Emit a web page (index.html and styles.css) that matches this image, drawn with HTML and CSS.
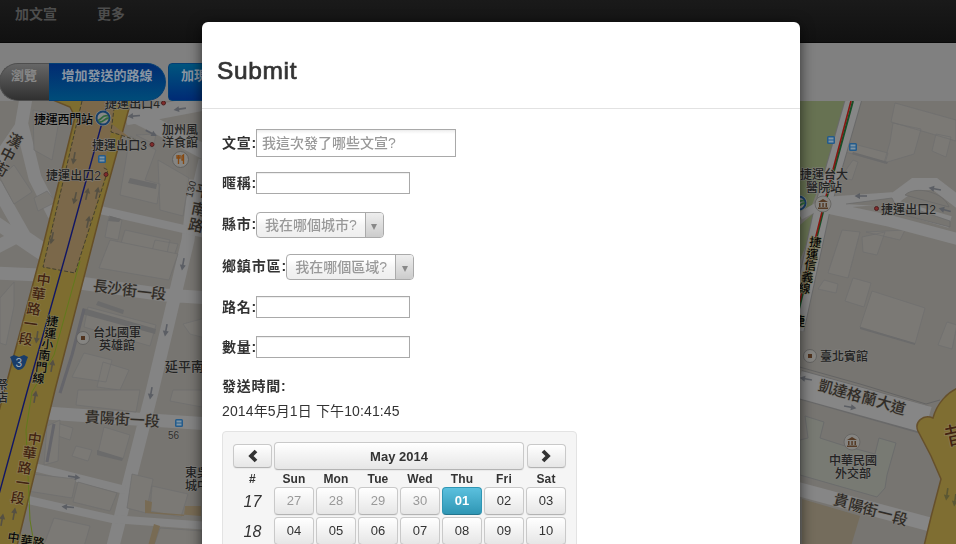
FILE: index.html
```html
<!DOCTYPE html>
<html lang="zh-Hant">
<head>
<meta charset="utf-8">
<title>Submit</title>
<link rel="stylesheet" href="styles.css">
</head>
<body>
<div class="page">
  <nav class="navbar"><a>加文宣</a><a>更多</a></nav>
  <div class="toolbar">
    <button class="tool tool-browse">瀏覽</button><button class="tool tool-route">增加發送的路線</button><button class="tool tool-spot">加現場</button>
  </div>
  <svg class="map" viewBox="0 101 956 443" width="956" height="443">
    <defs>
      <g id="bus"><rect x="-4" y="-4" width="8" height="8" rx="1.5" fill="#235b8b"/><path d="M-2.500-2.500h5v2h-5zM-2.500 .5h5v2h-5z" fill="#7f95a6"/></g>
      <g id="arrow"><path d="M-6-.8H1V-3L6.500 0L1 3V.8H-6Z"/></g>
      <g id="museum"><circle r="8" fill="#858481" stroke="#696866"/><path d="M-5-2L0-5L5-2ZM-4-1h1.500v4h-1.500zM-.7-1h1.500v4h-1.500zM2.500-1h1.500v4h-1.500zM-5 3.500h10v1.500h-10z" fill="#553a25"/></g>
      <g id="metro"><circle r="8" fill="#868886"/><circle r="6.500" fill="none" stroke="#173f69" stroke-width="2"/><path d="M-5 2C-2 3-1-4 5-2M-4 4C1 5 1 0 6 0" fill="none" stroke="#31683e" stroke-width="1.800"/></g>
    </defs>
    <rect y="101" width="956" height="443" fill="#777571"/>
    <!-- side streets -->
    <g fill="none" stroke="#848484" stroke-width="13">
      <path d="M26 98L21 127L-5 165M22 125L35 178L54 215M-5 184L25 237L50 254M-5 222L42 254M-5 273L40 275M-5 248L20 235"/>
      <path d="M80 283L165 295L210 298M195 180L188 240L152 392L112 550M46 413L210 424M205 160L190 225"/>
      <path d="M100 210L210 235M30 466L125 490M24 499L112 519L210 526" stroke-width="8"/>
      <path d="M126 118L205 103M128 112L160 128L210 155" stroke-width="15"/>
    </g>
    <!-- blocks -->
    <g fill="#7b7975" stroke="#6f6e6f" stroke-width=".7">
      <path d="M33 110L60 115L52 160L34 150ZM0 178L14 165L32 192L14 204ZM0 298L14 282L14 306L6 345L0 343ZM34 198L47 191L56 202L38 211Z"/>
      <path d="M130 136L156 150L145 180L160 184L157 204L120 195ZM158 160L189 178L183 216L160 210ZM109 216L122 220L118 240L105 237ZM125 230L170 240L163 270L116 260ZM155 240L178 244L170 268L150 258Z"/>
      <path d="M110 240L178 254L169 280L99 268ZM88 307L156 325L150 346L84 327ZM84 353L112 360L106 382L72 377ZM103 362L129 370L120 390L97 387Z"/>
      <path d="M78 390H140L136 412L76 405ZM173 390H202V407L170 401ZM57 423L73 428L70 440L55 435ZM76 446L92 450L88 461L72 456ZM104 427L130 435L123 459L98 453Z"/>
      <path d="M32 474L76 479L72 498L28 491ZM78 482L117 493L110 511L73 502ZM54 518L90 526L83 550H42ZM132 474L153 479L146 513L127 508ZM152 486L188 494L181 517L150 511ZM160 528L202 531V545H154Z"/>
      <path d="M183 324L205 318V338L190 334ZM47 426L60 420L58 461L44 465ZM136 135L156 134L154 144Z"/>
      <path d="M895 103L956 120V141L891 122ZM893 123L921 129L914 154L884 163L890 142ZM936 134L951 137L946 157L932 151ZM846 142L888 153L885 163L842 151ZM853 160L858 162L852 180L841 177Z"/>
      <path d="M842 230L860 232L848 278L828 273ZM862 237L885 232L877 255L863 252ZM853 278L871 283L864 307L845 301ZM872 291L925 308L915 344L860 327ZM824 280L838 284L836 293L818 289ZM947 322L957 325L952 349L938 345ZM866 232L905 230L900 240Z"/>
    </g>
    <path d="M805 416L824 422L820 438L845 446L875 454L879 438L896 443L887 475L885 488L877 497L800 475V440L808 438Z" fill="#787a73" stroke="#6b6c6c"/>
    <path d="M802 499L860 516L851 546H802Z" fill="#746c5c"/>
    <path d="M145 500L152 502L151 512L201 516V506L185 506L184 516L145 513ZM154 524L160 526L154 546H148Z" fill="#786b54"/>
    <g fill="#6b6b6b"><path d="M98 301L124 310L123 314L96 305ZM83 308L156 329L155 334L82 314ZM80 153L89 158L84 185L77 190ZM130 178L157 184L156 189L128 183ZM110 216L121 219L119 222L108 221ZM97 450L123 458L122 461L97 455ZM853 152L888 162L887 164L852 154ZM860 327L915 343L915 345L860 329Z"/></g>
    <!-- boulevard on the left -->
    <path d="M48 98H132L128 112L103 203L55 390L17 546H-2V415L42 250L75 117L70 107Z" fill="#7e6d30" stroke="#664f27" stroke-width="1.500"/>
    <path d="M82 101H115L110 132L129 137M115 101L111 132L105 164L107 170L75 273L43 267L82 101" fill="#7b684a"/>
    <path d="M82 101L43 267L75 273L108 170L102 167M115 101L111 132L136 140" fill="none" stroke="#44402f" stroke-dasharray="4 2"/>
    <path d="M80 261L54 355L32 392L26 430L30 520L34 544" fill="none" stroke="#617a1c"/>
    <path d="M108 101L67 250L27 392L-2 498" fill="none" stroke="#111665" stroke-width="1.400"/>
    <path d="M84 309L72 355L60 393M54 424L47 462" stroke="#65656a" stroke-width="3" fill="none"/>
    <g fill="#555043">
      <use href="#arrow" transform="translate(74 158) rotate(100)"/><use href="#arrow" transform="translate(75 198) rotate(103)"/>
      <use href="#arrow" transform="translate(87 194) rotate(-78)"/><use href="#arrow" transform="translate(97 193) rotate(-78)"/>
      <use href="#arrow" transform="translate(88 222) rotate(-78)"/><use href="#arrow" transform="translate(52 238) rotate(102)"/>
      <use href="#arrow" transform="translate(37 337) rotate(98)"/><use href="#arrow" transform="translate(52 366) rotate(-80)"/>
      <use href="#arrow" transform="translate(35 397) rotate(-80)"/><use href="#arrow" transform="translate(14 514) rotate(-80)"/>
      <use href="#arrow" transform="translate(2 520) rotate(-80)"/>
    </g>
    <g fill="#5b5e64">
      <use href="#arrow" transform="translate(134 116) rotate(175)"/><use href="#arrow" transform="translate(180 109) rotate(172)"/><use href="#arrow" transform="translate(151 133) rotate(28)"/>
      <use href="#arrow" transform="translate(183 264) rotate(100)"/><use href="#arrow" transform="translate(166 330) rotate(100)"/><use href="#arrow" transform="translate(151 393) rotate(100)"/>
      <use href="#arrow" transform="translate(74 477) rotate(8)"/><use href="#arrow" transform="translate(68 507) rotate(185)"/>
    </g>
    <!-- park and roads on the right -->
    <path d="M800 101H845L826 168L812 205L800 220Z" fill="#677252"/>
    <path d="M800 225L815 212L808 240L800 260Z" fill="#677252"/>
    <g fill="none" stroke="#696969">
      <path d="M854 98L822 210L796 330" stroke-width="17"/><path d="M854 98L822 210L796 330" stroke="#868686" stroke-width="15"/>
      <path d="M824 203L895 198L914 184L935 184L961 204M824 207L890 221L961 240M888 204L950 222" stroke="#868686" stroke-width="12"/>
      <path d="M798 384L925 420" stroke-width="29"/><path d="M798 384L928 420" stroke="#868686" stroke-width="27"/>
      <path d="M798 489L932 525" stroke="#868686" stroke-width="14"/><path d="M800 216L820 205" stroke="#868686" stroke-width="8"/>
      <path d="M846 204L892 198L900 214L950 227V221L912 208M905 195C915 185 944 192 949 207Z" fill="#777571" stroke-width=".7"/>
    </g>
    <path d="M853 101L825 204L799 309" stroke="#174e27" stroke-width="2" fill="none"/>
    <path d="M851 101L824 204L799 304" stroke="#861711" stroke-width="1.600" fill="none"/>
    <path d="M796 366L860 384L926 404L940 400" stroke="#646464" fill="none"/>
    <path d="M958 388C948 392 937 403 933 418C923 414 914 422 918 431L931 456L941 479L931 517L924 546H958Z" fill="#7f6e32" stroke="#66502b" stroke-width="1.500"/>
    <g fill="#5b5e64"><use href="#arrow" transform="translate(861 196) rotate(180)"/><use href="#arrow" transform="translate(935 189) rotate(190)"/><use href="#arrow" transform="translate(945 210) rotate(195)"/><use href="#arrow" transform="translate(806 379) rotate(190)"/><use href="#arrow" transform="translate(850 407) rotate(10)"/></g>
    <g fill="#5b5733"><use href="#arrow" transform="translate(947 494) rotate(98)"/><use href="#arrow" transform="translate(955 500) rotate(98)"/></g>
    <!-- markers -->
    <use href="#bus" x="102" y="159"/><use href="#bus" x="179" y="423"/><use href="#bus" x="831" y="140"/><use href="#bus" x="853" y="147"/>
    <use href="#metro" x="103" y="118"/><use href="#metro" x="799" y="203"/>
    <use href="#museum" x="823" y="204"/><use href="#museum" x="852" y="442"/>
    <g fill="#812b2b" stroke="#4b2020"><circle cx="152" cy="144.500" r="2"/><circle cx="106" cy="174.500" r="2"/><circle cx="163.500" cy="103" r="2"/><circle cx="876.500" cy="208.500" r="2"/></g>
    <g fill="#858481" stroke="#62615f"><circle cx="180.500" cy="159.500" r="8"/><circle cx="83" cy="338" r="6.500"/><circle cx="810" cy="356" r="6.500"/></g>
    <path d="M81 336h4v4h-4zM808 354h4v4h-4z" fill="#50331e"/>
    <path d="M178.500 155v9M177 155v3h3v-3M183.500 164v-9l-1.500 1v4h1.500" fill="none" stroke="#864911" stroke-width="1.300"/>
    <path d="M10 357L14 355L19 357L24 355L28 357C25 363 26 369 18 370C12 367 13 362 10 357Z" fill="#193d69"/>
    <text x="15.500" y="367" fill="#9eabb8" font-size="12">3</text>
    <!-- labels -->
    <g class="poi">
      <text class="station" x="34" y="123.500" textLength="59">捷運西門站</text><text x="105" y="107.500" textLength="55">捷運出口4</text>
      <text x="92" y="149.500" textLength="55">捷運出口3</text><text x="46" y="179.500" textLength="55">捷運出口2</text>
      <text x="162" y="133.500">加州風</text><text x="162" y="146.500">洋食館</text>
      <text x="93" y="336.500">台北國軍</text><text x="99" y="349.500">英雄館</text>
      <text x="165" y="370.500" font-size="13">延平南</text><text x="185" y="477">東吳</text><text x="185" y="490">城中</text>
      <text x="-4" y="389">祭</text><text x="-4" y="402">店</text>
      <text x="800" y="178.500">捷運台大</text><text x="806" y="191.500">醫院站</text><text x="881" y="213.500" textLength="55">捷運出口2</text>
      <text x="820" y="360.500">臺北賓館</text><text x="829" y="464.500">中華民國</text><text x="835" y="477.500">外交部</text>
      <text class="num" x="168" y="439">56</text><text class="num" transform="translate(192 198) rotate(-75)">130</text>
    </g>
    <g class="street" transform="translate(0 5)">
      <text x="100 114 129 144 158" y="286 288 290 292 293" rotate="6">長沙街一段</text>
      <text x="92 107 122 137 152" y="417 418 419 420 421" rotate="3">貴陽街一段</text>
      <text x="825 839 853 868 883 897" y="385 389 393 397 401 406" rotate="15">凱達格蘭大道</text>
      <text x="840 855 869 884 899" y="499 504 508 512 517" rotate="14">貴陽街一段</text>
      <text x="13 6 -1" y="137 151 165" rotate="28">漢中街</text>
      <text x="202 198 195" y="190 208 224" rotate="12">平南路</text>
    </g>
    <g class="avenue" transform="translate(0 5)">
      <text x="43 38 33 30 25" y="279 293 308 323 338" rotate="8">中華路一段</text>
      <text x="34 29 24 22 17" y="438 452 467 482 497" rotate="8">中華路一段</text>
      <text class="circle" x="958" y="441" rotate="-12">昔</text>
    </g>
    <g class="line" transform="translate(0 4)">
      <text x="52 50 47 44 41 38" y="321 333 344 355 367 378" rotate="6">捷運小南門線</text>
      <text x="815 812 810 807 804" y="242 254 265 277 288" rotate="6">捷運信義線</text>
      <text x="13 26 38" y="537 540 542" rotate="8">中華路</text>
      <text x="799" y="322">捷</text>
    </g>
  </svg>
</div>

<section class="modal">
  <header class="modal-header"><h3>Submit</h3></header>
  <form class="modal-body">
    <div class="row row-leaflet"><label>文宣:</label><input class="wide" type="text" placeholder="我這次發了哪些文宣?"></div>
    <div class="row"><label>暱稱:</label><input type="text"></div>
    <div class="row row-select"><label>縣市:</label><div class="select"><span>我在哪個城市?</span><i></i></div></div>
    <div class="row row-select row-area"><label>鄉鎮市區:</label><div class="select"><span>我在哪個區域?</span><i></i></div></div>
    <div class="row"><label>路名:</label><input type="text"></div>
    <div class="row"><label>數量:</label><input type="text"></div>
    <div class="row row-time"><label>發送時間:</label></div>
    <p class="stamp">2014年5月1日 下午10:41:45</p>
    <div class="calendar">
      <div class="cal-head">
        <button type="button" class="btn arrow"><svg width="13" height="14" viewBox="0 0 13 14"><path d="M10 2L5 7L10 12" /></svg></button>
        <button type="button" class="btn month">May 2014</button>
        <button type="button" class="btn arrow"><svg width="13" height="14" viewBox="0 0 13 14"><path d="M3 2L8 7L3 12" /></svg></button>
      </div>
      <div class="week names"><b>#</b><b>Sun</b><b>Mon</b><b>Tue</b><b>Wed</b><b>Thu</b><b>Fri</b><b>Sat</b></div>
      <div class="week"><em>17</em><span class="btn muted">27</span><span class="btn muted">28</span><span class="btn muted">29</span><span class="btn muted">30</span><span class="btn active">01</span><span class="btn">02</span><span class="btn">03</span></div>
      <div class="week"><em>18</em><span class="btn">04</span><span class="btn">05</span><span class="btn">06</span><span class="btn">07</span><span class="btn">08</span><span class="btn">09</span><span class="btn">10</span></div>
    </div>
  </form>
</section>
</body>
</html>
```
FILE: styles.css
```css
* { box-sizing: border-box; }
html, body { margin: 0; height: 544px; overflow: hidden; }
body { background: #808080; color: #333; font: 14px/20px "Liberation Sans", "Noto Sans CJK TC", sans-serif; }
button, input { font-family: inherit; margin: 0; }
.page { width: 956px; height: 544px; overflow: hidden; }
.navbar { display: flex; gap: 40px; height: 43px; padding: 4px 15px; background: linear-gradient(#1a1a1a, #111); border-bottom: 1px solid #090909; color: #4d4d4d; font-weight: bold; }
.toolbar { display: flex; height: 58px; padding-top: 20px; }
.tool { height: 38px; border: 1px solid #2b4c65; padding: 0 12px 12px; font-size: 13px; line-height: 24px; font-weight: bold; color: #8995a2; white-space: nowrap; }
.tool-browse { width: 50px; margin-left: -1px; padding: 0 12px 12px 11px; border-color: #4e4e4e; border-right: 0; border-radius: 19px 0 0 19px; background: linear-gradient(#666, #303030); color: #888; }
.tool-route { width: 117px; border-color: #053f73; border-left: 0; border-radius: 0 19px 19px 0; background: linear-gradient(#012c72, #004c79); }
.tool-spot { width: 65px; margin-left: 2px; border-color: #053f73; border-radius: 4px; background: linear-gradient(#00557e, #002b75); }
.map { display: block; }
.map text { font-family: "Liberation Sans", "Noto Sans CJK TC", sans-serif; paint-order: stroke; }
.poi { font-size: 12px; font-weight: 500; fill: #232323; stroke: #807f7c; stroke-width: 1.2px; }
.poi .station { fill: #060606; }
.poi .num { font-size: 10px; fill: #2f2e2c; }
.street { font-size: 15px; font-weight: 500; fill: #302c27; stroke: #807f7c; stroke-width: 1.2px; text-anchor: middle; }
.avenue { font-size: 14px; font-weight: 500; fill: #422411; stroke: #8a7b51; stroke-width: 1.6px; text-anchor: middle; }
.avenue .circle { font-size: 24px; font-weight: normal; }
.line { font-size: 12px; font-weight: 500; fill: #080808; stroke: #85815f; stroke-width: 1.2px; text-anchor: middle; }

.modal { position: fixed; left: 202px; top: 22px; width: 598px; height: 600px; background: #fff; border-radius: 6px; box-shadow: 0 3px 14px rgba(0, 0, 0, .65); overflow: hidden; }
.modal-header { height: 87px; padding: 29px 15px 0; border-bottom: 1px solid #e2e2e2; }
h3 { margin: 0; font-size: 24.5px; line-height: 40px; font-weight: normal; letter-spacing: .65px; -webkit-text-stroke: .7px #333; }
.modal-body { margin: 0; padding: 20px; }
.row { display: flex; align-items: center; height: 22px; margin-bottom: 18px; }
.row label { font-weight: bold; letter-spacing: .75px; white-space: nowrap; margin-right: -1px; }
.row-leaflet { height: 28px; margin-bottom: 15px; }
.row-select { height: 26px; margin-bottom: 16px; }
.row-select label { padding-bottom: 2px; }
.row-area label { letter-spacing: .85px; margin-right: -.7px; }
.row input { width: 154px; height: 22px; border: 1px solid #a9a9a9; border-radius: 0; padding: 1px 5px; background: #fff; font-size: 14px; box-shadow: inset 0 1px 1px #eee; }
.row input.wide { width: 200px; height: 28px; background: linear-gradient(#eee, #fff 15%); }
input::placeholder { color: #999; opacity: 1; font-weight: 500; }
.select { display: flex; width: 128px; height: 26px; border: 1px solid #aaa; border-radius: 4px; overflow: hidden; background: linear-gradient(#fff 20%, #f4f4f4 52%, #eee); color: #999; line-height: 25px; }
.select span { width: 108px; padding-left: 8px; white-space: nowrap; font-weight: 500; }
.select i { display: flex; align-items: center; justify-content: center; width: 18px; border-left: 1px solid #aaa; background: linear-gradient(#eee, #ccc); }
.select i::after { content: ""; margin-top: 3px; border: 3px solid transparent; border-top: 6px solid #888; border-bottom: 0; }
.row-time { height: 20px; margin: -1px 0 5px; padding-top: 1px; }
.stamp { margin: 0; padding-top: 1px; letter-spacing: .13px; }
.calendar { width: 355px; height: 250px; margin-top: 10px; padding: 10px; border: 1px solid #e3e3e3; border-radius: 4px; background: #f5f5f5; }
.btn { display: flex; align-items: center; justify-content: center; width: 40px; height: 28px; border: 1px solid #c9c9c9; border-bottom-color: #b3b3b3; border-radius: 4px; background: linear-gradient(#fff, #e6e6e6); box-shadow: inset 0 1px 0 #fff, 0 1px 1px rgba(0, 0, 0, .05); font-size: 13px; color: #333; padding: 0; }
.cal-head { display: flex; align-items: center; gap: 2px; height: 28px; }
.cal-head .arrow { width: 39px; height: 24px; }
.cal-head .month { width: 250px; height: 28px; font-weight: bold; }
.arrow:last-child { margin-left: 1px; }
.arrow path { fill: none; stroke: #333; stroke-width: 3.8; }
.week { display: grid; grid-template-columns: 39px repeat(7, 40px); column-gap: 2px; height: 30px; align-items: start; text-align: center; }
.names { height: 17px; font-size: 12px; line-height: 19px; letter-spacing: .15px; }
.week em { font-size: 16px; line-height: 29px; }
.week .active { color: #fff; font-weight: bold; border-color: #2f96b4 #2f96b4 #24748c; background: linear-gradient(#5bc0de, #2f96b4); box-shadow: none; }
.muted { color: #999; }
```
